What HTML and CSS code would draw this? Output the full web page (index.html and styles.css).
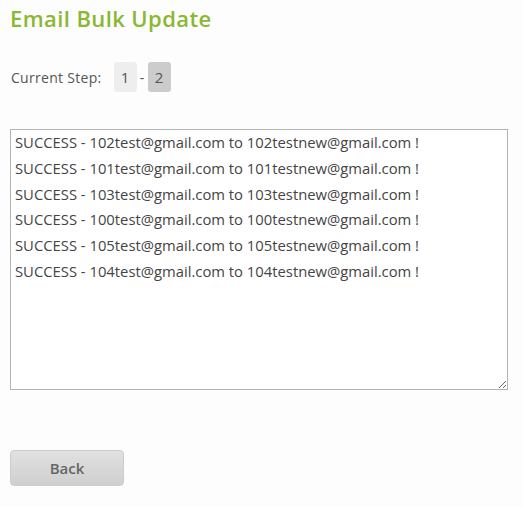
FILE: index.html
```html
<!DOCTYPE html>
<html lang="en">
<head>
  <meta charset="UTF-8" />
  <title>Email Bulk Update</title>
  <link rel="stylesheet" href="styles.css">
</head>
<body>
  <!-- Page Title -->
  <h1 class="page-title">Email Bulk Update</h1>

  <!-- Step Indicator -->
  <div class="steps">
    <span class="steps-label">Current Step:</span>
    <span class="step">1</span>
    <span class="step-sep">-</span>
    <span class="step active">2</span>
  </div>

  <!-- Results -->
  <textarea class="results" readonly>SUCCESS - 102test@gmail.com to 102testnew@gmail.com !
SUCCESS - 101test@gmail.com to 101testnew@gmail.com !
SUCCESS - 103test@gmail.com to 103testnew@gmail.com !
SUCCESS - 100test@gmail.com to 100testnew@gmail.com !
SUCCESS - 105test@gmail.com to 105testnew@gmail.com !
SUCCESS - 104test@gmail.com to 104testnew@gmail.com !</textarea>

  <div class="actions">
    <button class="btn-back">Back</button>
  </div>
</body>
</html>
```

FILE: styles.css
```css
* {
  box-sizing: border-box;
}
body {
  font-family: "Open Sans", Arial, sans-serif;
  margin: 0;
  padding: 5px 10px 10px;
  background-color: #fdfdfd;
  color: #555;
}
.page-title {
  margin: 0;
  font-size: 22px;
  font-weight: 600;
  line-height: 27px;
  letter-spacing: 0.4px;
  color: #8ab833;
}
.steps {
  display: flex;
  align-items: center;
  height: 30px;
  margin-top: 30px;
  font-size: 14px;
  letter-spacing: 0.3px;
}
.steps-label {
  margin-left: 1px;
  margin-right: 12px;
}
.step {
  display: flex;
  align-items: center;
  justify-content: center;
  width: 23px;
  height: 30px;
  border-radius: 3px;
  background-color: #eeeeee;
  font-size: 15px;
}
.step.active {
  background-color: #cccccc;
}
.step-sep {
  width: 11px;
  text-align: center;
}
.results {
  display: block;
  width: 498px;
  height: 261px;
  margin-top: 37px;
  padding: 0 4px;
  border: 1px solid #b3b3b3;
  background: #fff;
  font-family: "Open Sans", Arial, sans-serif;
  font-size: 14.8px;
  line-height: 25.8px;
  color: #444;
  resize: both;
}
.actions {
  margin-top: 60px;
}
.btn-back {
  width: 114px;
  height: 36px;
  border: 1px solid #cdcdcd;
  border-radius: 4px;
  background: linear-gradient(#e1e1e1, #cfcfcf);
  font-family: "Open Sans", Arial, sans-serif;
  font-size: 15px;
  font-weight: 600;
  color: #666;
  cursor: pointer;
}
```
